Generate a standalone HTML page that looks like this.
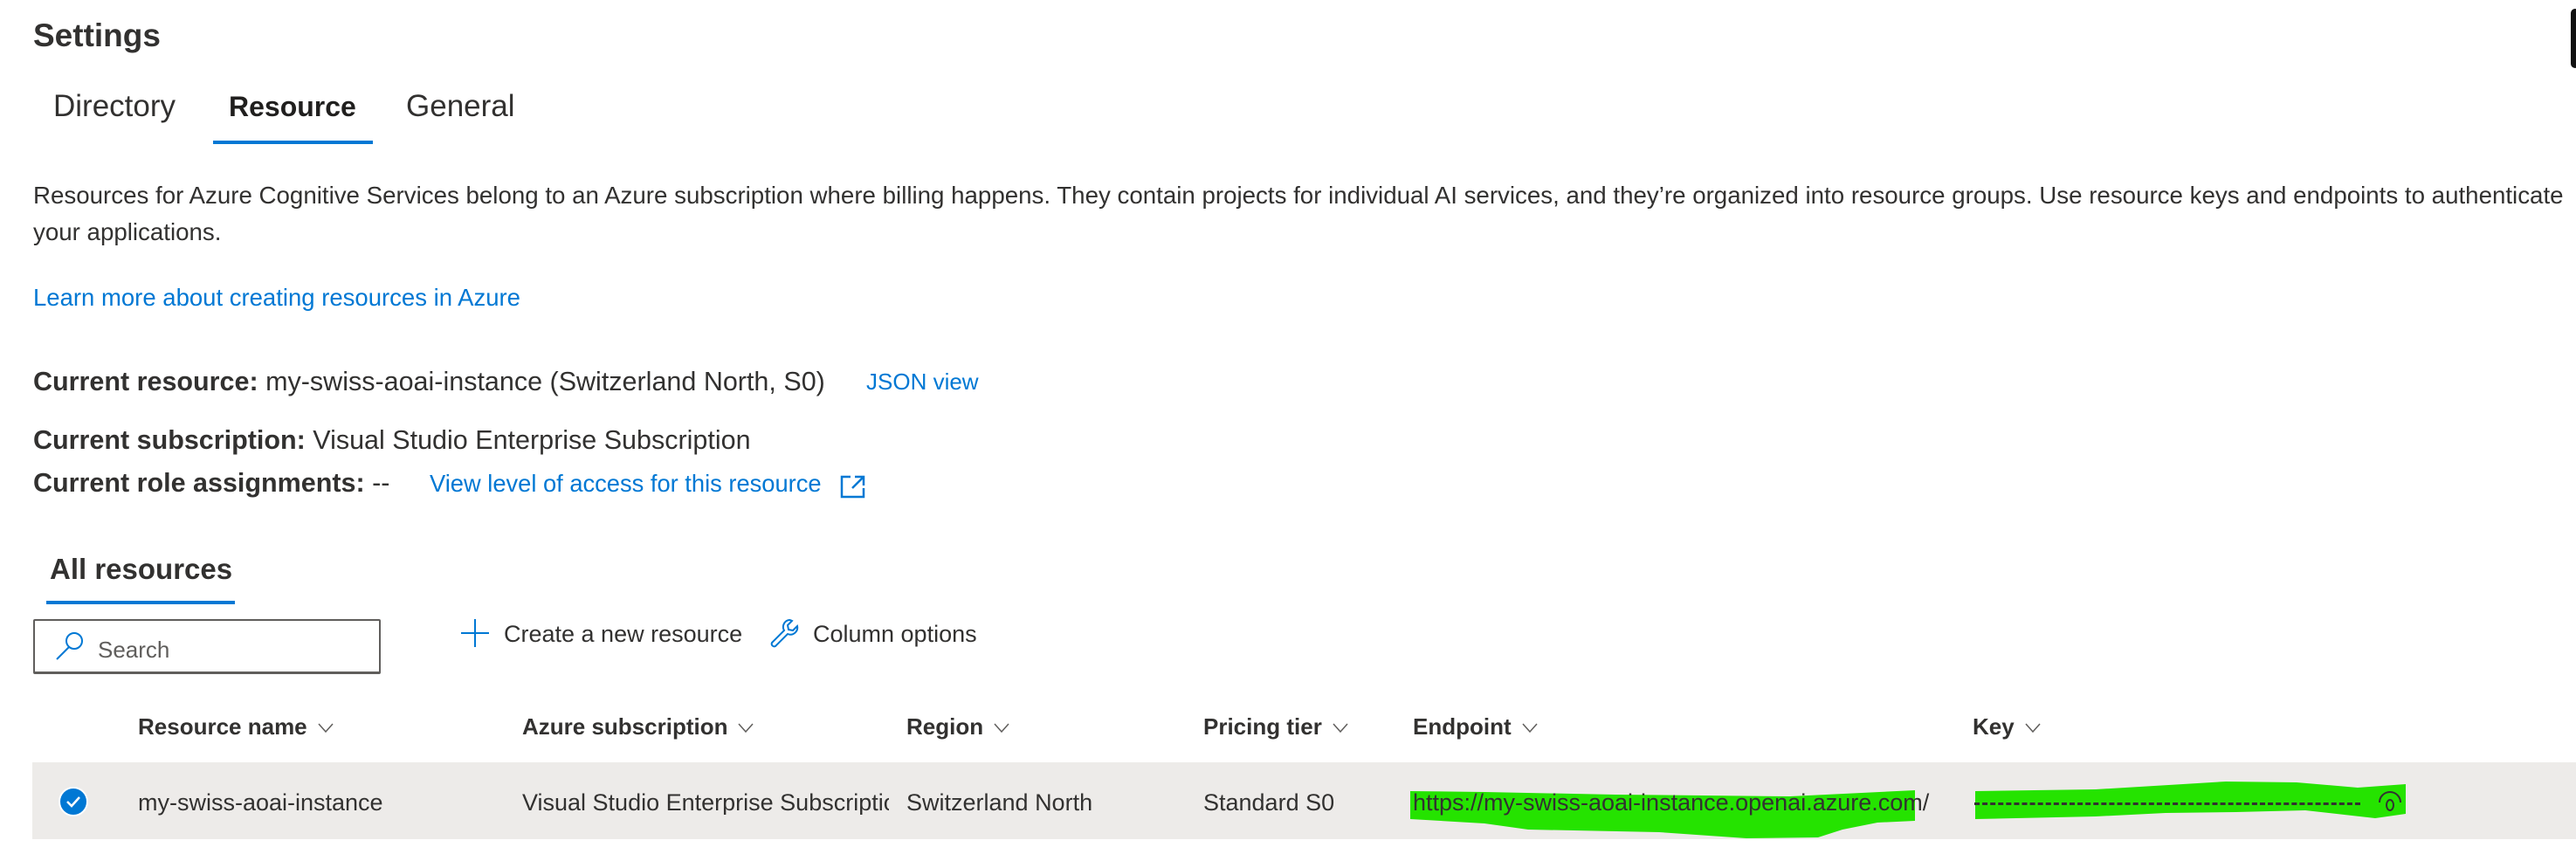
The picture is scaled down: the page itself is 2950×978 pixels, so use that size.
<!DOCTYPE html>
<html><head><meta charset="utf-8"><style>
*{margin:0;padding:0;box-sizing:border-box}
body{width:2950px;height:978px;background:#fff;position:relative;overflow:hidden;font-family:"Liberation Sans",sans-serif;color:#323130}
.a{position:absolute;white-space:nowrap;line-height:1}
.l{color:#0078d4}
b{font-weight:bold}
.h{font-size:26px;font-weight:bold}
.chev{display:inline-block;margin-left:12px;vertical-align:middle}
</style></head><body>
<div style="position:absolute;left:2944px;top:10px;width:10px;height:68px;background:#111;border-radius:6px"></div>
<div class="a" style="left:38px;top:22px;font-size:37px;font-weight:bold">Settings</div>
<div class="a" style="left:61px;top:104px;font-size:35px">Directory</div>
<div class="a" style="left:262px;top:106px;font-size:32px;font-weight:bold;color:#201f1e">Resource</div>
<div class="a" style="left:465px;top:104px;font-size:35px">General</div>
<div style="position:absolute;left:244px;top:161px;width:183px;height:4px;background:#0078d4"></div>
<div class="a" style="left:38px;top:210px;font-size:27.7px">Resources for Azure Cognitive Services belong to an Azure subscription where billing happens. They contain projects for individual AI services, and they’re organized into resource groups. Use resource keys and endpoints to authenticate</div>
<div class="a" style="left:38px;top:252px;font-size:27.7px">your applications.</div>
<div class="a l" style="left:38px;top:327px;font-size:27.5px">Learn more about creating resources in Azure</div>
<div class="a" style="left:38px;top:422px;font-size:30.5px"><b>Current resource:</b> my-swiss-aoai-instance (Switzerland North, S0)</div>
<div class="a l" style="left:992px;top:424px;font-size:26px">JSON view</div>
<div class="a" style="left:38px;top:489px;font-size:30.5px"><b>Current subscription:</b> Visual Studio Enterprise Subscription</div>
<div class="a" style="left:38px;top:538px;font-size:30.5px"><b>Current role assignments:</b> --</div>
<div class="a l" style="left:492px;top:540px;font-size:27.3px">View level of access for this resource</div>
<svg style="position:absolute;left:962px;top:543px" width="30" height="28" viewBox="0 0 30 28" fill="none" stroke="#0078d4" stroke-width="2.5"><path d="M12 3H2v23h25V16M17 3h10v10M27 3L14 16"/></svg>
<div class="a" style="left:57px;top:635px;font-size:33px;font-weight:bold">All resources</div>
<div style="position:absolute;left:53px;top:688px;width:216px;height:4px;background:#0078d4"></div>
<div style="position:absolute;left:38px;top:709px;width:398px;height:63px;border:2px solid #605e5c;border-bottom-width:3px;border-radius:2px"></div>
<svg style="position:absolute;left:60px;top:722px" width="40" height="36" viewBox="0 0 40 36" fill="none" stroke="#0078d4" stroke-width="2"><circle cx="25" cy="12" r="9"/><path d="M19 19L5 33"/></svg>
<div class="a" style="left:112px;top:731px;font-size:26px;color:#605e5c">Search</div>
<svg style="position:absolute;left:527px;top:708px" width="34" height="34" viewBox="0 0 34 34" stroke="#0078d4" stroke-width="2"><path d="M17 1v32M1 17h32"/></svg>
<div class="a" style="left:577px;top:713px;font-size:27px">Create a new resource</div>
<svg style="position:absolute;left:880px;top:707px" width="36" height="36" viewBox="0 0 36 36" fill="none" stroke="#0078d4" stroke-width="2"><path d="M24 3a8 8 0 0 0-6 12L4 29a3 3 0 0 0 4 4l14-14a8 8 0 0 0 11-9l-5 5-5-1-1-5 5-5a8 8 0 0 0-3-1z"/></svg>
<div class="a" style="left:931px;top:713px;font-size:27px">Column options</div>
<div class="a h" style="left:158px;top:819px">Resource name<svg class="chev" width="18" height="12" viewBox="0 0 18 12" fill="none" stroke="#605e5c" stroke-width="1.5"><path d="M1 1l8 9 8-9"/></svg></div>
<div class="a h" style="left:598px;top:819px">Azure subscription<svg class="chev" width="18" height="12" viewBox="0 0 18 12" fill="none" stroke="#605e5c" stroke-width="1.5"><path d="M1 1l8 9 8-9"/></svg></div>
<div class="a h" style="left:1038px;top:819px">Region<svg class="chev" width="18" height="12" viewBox="0 0 18 12" fill="none" stroke="#605e5c" stroke-width="1.5"><path d="M1 1l8 9 8-9"/></svg></div>
<div class="a h" style="left:1378px;top:819px">Pricing tier<svg class="chev" width="18" height="12" viewBox="0 0 18 12" fill="none" stroke="#605e5c" stroke-width="1.5"><path d="M1 1l8 9 8-9"/></svg></div>
<div class="a h" style="left:1618px;top:819px">Endpoint<svg class="chev" width="18" height="12" viewBox="0 0 18 12" fill="none" stroke="#605e5c" stroke-width="1.5"><path d="M1 1l8 9 8-9"/></svg></div>
<div class="a h" style="left:2259px;top:819px">Key<svg class="chev" width="18" height="12" viewBox="0 0 18 12" fill="none" stroke="#605e5c" stroke-width="1.5"><path d="M1 1l8 9 8-9"/></svg></div>
<div style="position:absolute;left:37px;top:873px;width:2913px;height:88px;background:#edebe9"></div>
<svg style="position:absolute;left:66px;top:900px" width="36" height="36" viewBox="0 0 36 36"><circle cx="18" cy="18" r="16" fill="#0078d4" stroke="#fff" stroke-width="2"/><path d="M11 18l5 5 9-10" fill="none" stroke="#fff" stroke-width="2.5"/></svg>
<svg style="position:absolute;left:0;top:0" width="2950" height="978"><polygon fill="#25e300" points="1615,906 1700,907 1850,910 2050,912 2193,905 2193,940 2150,942 2110,950 2082,959 2000,960 1900,953 1750,950 1700,943 1615,938"/><polygon fill="#25e300" points="2262,906 2400,904 2500,898 2549,895 2630,896 2700,902 2755,898 2755,932 2720,937 2640,928 2560,930 2480,931 2400,935 2262,938"/></svg>
<div class="a" style="left:158px;top:906px;font-size:27px">my-swiss-aoai-instance</div>
<div class="a" style="left:598px;top:906px;font-size:27px;width:420px;overflow:hidden">Visual Studio Enterprise Subscription</div>
<div class="a" style="left:1038px;top:906px;font-size:27px">Switzerland North</div>
<div class="a" style="left:1378px;top:906px;font-size:27px">Standard S0</div>
<div class="a" style="left:1618px;top:906px;font-size:27px">https://my-swiss-aoai-instance.openai.azure.com/</div>
<div style="position:absolute;left:2261px;top:919px;width:442px;border-top:3px dashed #323130"></div>
<svg style="position:absolute;left:2722px;top:905px" width="30" height="28" viewBox="0 0 30 28" fill="none" stroke="#323130" stroke-width="2"><path d="M3 14a12 12 0 0 1 24 0"/><ellipse cx="15" cy="17" rx="4" ry="6"/></svg>
</body></html>
